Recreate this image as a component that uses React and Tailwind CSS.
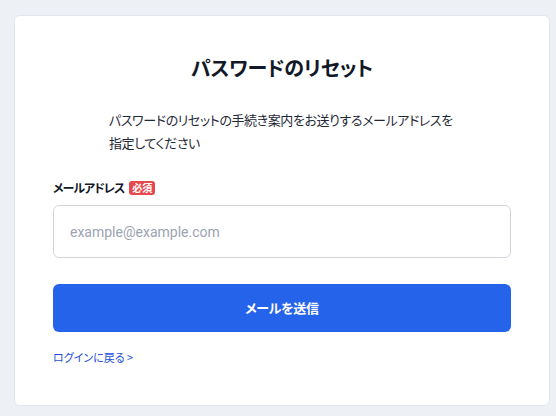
export default function App() {
  return (
    <div
      className="min-h-screen bg-[#edf0f5] pt-[15px] pl-[14px] [font-feature-settings:'palt']"
      style={{ fontFamily: '"Noto Sans CJK JP", "Noto Sans", sans-serif' }}
    >
      <div className="w-[536px] h-[391px] bg-white rounded-[6px] border border-[#e3e6ec] px-[38px] pt-[35px]">
        <h1 className="text-center text-[20px] font-bold text-[#111827] leading-[34px] tracking-[-0.2px]">
          パスワードのリセット
        </h1>

        <p className="mx-auto mt-[23px] w-[346px] text-[13px] leading-[23px] tracking-[-0.4px] text-[#1f2937]">
          <span className="whitespace-nowrap">パスワードのリセットの手続き案内をお送りするメールアドレスを</span>
          <br />
          指定してください
        </p>

        <div className="mt-[24px] flex items-center gap-[5px]">
          <span className="text-[12px] font-bold text-[#111827] leading-[20px] tracking-[-1px]">メールアドレス</span>
          <span className="rounded-[3px] bg-[#e5484d] px-[3px] text-[10px] font-bold leading-[14px] text-white">
            必須
          </span>
        </div>

        <input
          type="email"
          placeholder="example@example.com"
          className="mt-[7px] block h-[53px] w-full rounded-[6px] border border-[#d1d5db] px-[16px] text-[14px] text-gray-800 placeholder:text-[#9ca3af] outline-none"
          style={{ fontFamily: 'Roboto, "Noto Sans", sans-serif' }}
        />

        <button className="mt-[26px] h-[48px] w-full rounded-[6px] bg-[#2563eb] text-[13px] font-bold tracking-[-0.3px] text-white">
          メールを送信
        </button>

        <a href="#" className="mt-[17px] block text-[11px] leading-[16px] text-[#1d4ed8]">
          ログインに戻る &gt;
        </a>
      </div>
    </div>
  );
}
